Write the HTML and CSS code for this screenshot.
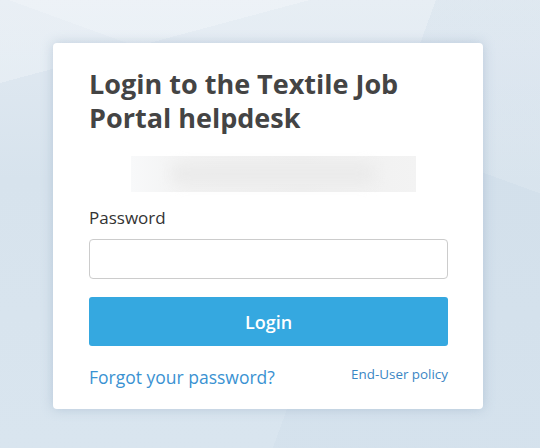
FILE: index.html
```html
<!DOCTYPE html>
<html lang="en">
<head>
<meta charset="utf-8">
<title>Login to the Textile Job Portal helpdesk</title>
<link rel="stylesheet" href="styles.css">
</head>
<body>
<div class="page">
  <div class="card">
    <h1 class="title">Login to the Textile Job Portal helpdesk</h1>
    <div class="sso"><div class="sso-blur"></div></div>
    <label class="label" for="pw">Password</label>
    <input class="input" id="pw" type="password">
    <button class="btn" type="button">Login</button>
    <div class="links">
      <a class="forgot" href="#">Forgot your password?</a>
      <a class="policy" href="#">End-User policy</a>
    </div>
  </div>
</div>
</body>
</html>
```
FILE: styles.css
```css
html, body {
  margin: 0;
  padding: 0;
  height: 100%;
}
body {
  font-family: "Open Sans", "Noto Sans", sans-serif;
  background:
    linear-gradient(165deg, rgba(255,255,255,0.25) 0 14%, rgba(255,255,255,0) 14% 100%),
    linear-gradient(110deg, rgba(255,255,255,0) 0 62%, rgba(200,216,230,0.25) 62% 100%),
    linear-gradient(20deg, rgba(255,255,255,0) 0 70%, rgba(255,255,255,0.18) 70% 100%),
    linear-gradient(180deg, #e2eaf2 0%, #d7e3ed 40%, #d9e5ef 100%);
}
.page {
  padding: 43px 57px 0 53px;
}
.card {
  width: 430px;
  height: 366px;
  box-sizing: border-box;
  background: #fff;
  border-radius: 4px;
  box-shadow: 0 0 12px rgba(140,165,190,0.45);
  padding: 24px 35px 0 36px;
  display: flex;
  flex-direction: column;
}
.title {
  margin: 0;
  font-size: 27px;
  line-height: 34px;
  font-weight: 700;
  color: #444;
}
.sso {
  margin: 21px 0 0 42px;
  width: 285px;
  height: 36px;
  background: linear-gradient(90deg, #f8f9fa 0%, #f2f2f2 20%, #efefef 60%, #f3f3f3 100%);
  position: relative;
}
.sso-blur {
  position: absolute;
  inset: 8px 40px;
  background: #ebebeb;
  filter: blur(6px);
  border-radius: 10px;
}
.label {
  margin-top: 14px;
  font-size: 17px;
  line-height: 24px;
  color: #333;
}
.input {
  margin-top: 9px;
  height: 40px;
  box-sizing: border-box;
  border: 1px solid #ccc;
  border-radius: 4px;
  width: 100%;
  font: inherit;
}
.btn {
  margin-top: 18px;
  height: 49px;
  width: 100%;
  border: 0;
  border-radius: 3px;
  background: #35a8e0;
  color: #fff;
  font-family: inherit;
  font-size: 18px;
  font-weight: 600;
}
.links {
  margin-top: 19px;
  display: flex;
  justify-content: space-between;
  align-items: baseline;
}
.forgot {
  font-size: 17.5px;
  color: #3a92d2;
  text-decoration: none;
}
.policy {
  font-size: 13.4px;
  color: #3a86c4;
  text-decoration: none;
  position: relative;
  top: -5px;
}
```
